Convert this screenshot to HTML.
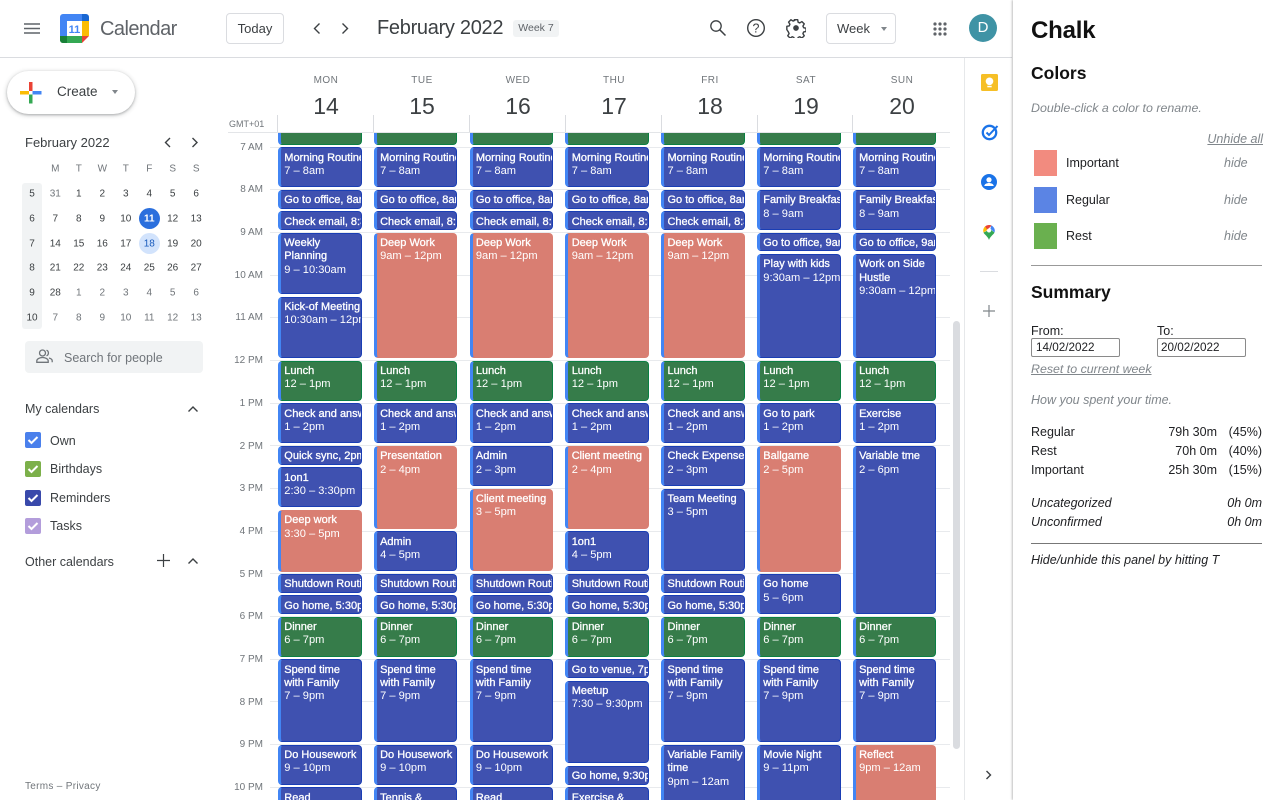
<!DOCTYPE html>
<html><head><meta charset="utf-8"><title>Calendar</title>
<style>
html,body{margin:0;padding:0;width:1280px;height:800px;overflow:hidden;background:#fff;font-family:"Liberation Sans",sans-serif;color:#3c4043}
.x{position:absolute;white-space:nowrap}
.c{position:absolute;white-space:nowrap;transform:translate(-50%,-50%)}
.m{font-size:10px;color:#3c4043}
.m.o{color:#70757a}
.e{position:absolute;box-sizing:border-box;width:83.5px;border:1px solid #1a3eb4;border-left:3px solid #4285f4;border-radius:4px;background:#3f51b0;color:#fff;font-size:11.1px;line-height:13.33px;padding:3.3px 0 0 3.3px;overflow:hidden;white-space:nowrap}
.e b{font-weight:normal;font-size:11px;-webkit-text-stroke:.3px #fff}
.s{background:#d97e72;border-color:#d97e72;border-left-color:#4285f4}
.g{background:#367c4a;border-color:#0b8043;border-left-color:#4285f4}
.k{border-bottom:0;border-radius:4px 4px 0 0}
.c1{left:278px}.c2{left:373.8px}.c3{left:469.6px}.c4{left:565.4px}.c5{left:661.2px}.c6{left:757px}.c7{left:852.8px}
.hl{position:absolute;left:270px;width:680px;height:1px;background:#e8eaed}
.tl{position:absolute;left:220px;width:43px;text-align:right;font-size:10px;color:#70757a;line-height:12px}
.dn{position:absolute;width:60px;text-align:center;font-size:10px;letter-spacing:.5px;color:#70757a;top:75px}
.dd{position:absolute;width:60px;text-align:center;font-size:23px;color:#3c4043;top:93px}
.vt{position:absolute;top:115px;width:1px;height:17px;background:#dadce0}
.cb{position:absolute;left:25px;width:16px;height:16px;border-radius:2px}
.it{font-style:italic;color:#80868b}
.p{font-size:12.5px;color:#202124}
</style></head><body>

<!-- top bar -->
<div style="position:absolute;left:0;top:57px;width:1012px;height:1px;background:#dadce0"></div>
<svg class="x" style="left:24px;top:23px" width="16" height="11"><path d="M0 1h16M0 5.5h16M0 10h16" stroke="#5f6368" stroke-width="1.5"/></svg>
<svg class="x" style="left:60px;top:14px" width="29" height="29" viewBox="0 0 29 29">
<path d="M3 0h19v7H7v15H0V3a3 3 0 0 1 3-3z" fill="#4285f4"/>
<path d="M22 0h4a3 3 0 0 1 3 3v4h-7z" fill="#1967d2"/>
<path d="M22 7h7v15h-7z" fill="#fbbc04"/>
<path d="M7 22h15v7H3a3 3 0 0 1-3-3v-4h7z" fill="#34a853"/>
<path d="M0 22h7v7H3a3 3 0 0 1-3-3z" fill="#188038"/>
<path d="M22 22h7l-7 7z" fill="#ea4335"/>
<rect x="7" y="7" width="15" height="15" fill="#fff"/>
<text x="14.5" y="19" text-anchor="middle" font-size="11" font-weight="bold" fill="#4285f4" font-family="Liberation Sans">11</text>
</svg>
<div class="x" style="left:100px;top:17px;font-size:20px;letter-spacing:-.55px;color:#5f6368;line-height:24px">Calendar</div>
<div class="x" style="left:226px;top:13px;width:56px;height:29px;border:1px solid #dadce0;border-radius:4px;text-align:center;line-height:29px;font-size:13px;color:#3c4043">Today</div>
<svg class="x" style="left:311px;top:21px" width="12" height="15"><path d="M8.500 2.500L3.500 7.500l5 5" fill="none" stroke="#3c4043" stroke-width="1.400"/></svg>
<svg class="x" style="left:339px;top:21px" width="12" height="15"><path d="M3.500 2.500l5 5-5 5" fill="none" stroke="#3c4043" stroke-width="1.400"/></svg>
<div class="x" style="left:377px;top:16px;font-size:20px;letter-spacing:-.3px;color:#3c4043;line-height:24px">February 2022</div>
<div class="x" style="left:513px;top:20px;width:46px;height:17px;background:#f1f3f4;border-radius:3px;text-align:center;font-size:10.500px;line-height:17px;color:#5f6368">Week 7</div>
<svg class="x" style="left:709px;top:19px" width="18" height="18"><circle cx="7" cy="7" r="5.200" fill="none" stroke="#3c4043" stroke-width="1.300"/><path d="M10.800 10.800L16.500 16.500" stroke="#3c4043" stroke-width="1.500"/></svg>
<svg class="x" style="left:746px;top:18px" width="20" height="20"><circle cx="10" cy="10" r="8.300" fill="none" stroke="#3c4043" stroke-width="1.400"/><text x="10" y="14.500" text-anchor="middle" font-size="12.500" fill="#3c4043" font-family="Liberation Sans">?</text></svg>
<svg class="x" style="left:786px;top:18px" width="20" height="20" viewBox="0 0 24 24"><path d="M10 2h4l.5 3 2 .9 2.600-1.600 2.800 2.800-1.600 2.600.9 2 2.800.5v4l-2.800.5-.9 2 1.600 2.600-2.800 2.800-2.600-1.600-2 .9-.5 2.800h-4l-.5-2.800-2-.9-2.600 1.600-2.800-2.800 1.600-2.600-.9-2L1 14v-4l2.800-.5.9-2-1.600-2.600 2.800-2.800 2.600 1.600 2-.9z" fill="none" stroke="#3c4043" stroke-width="1.700" stroke-linejoin="round"/><circle cx="12" cy="12" r="3.400" fill="#3c4043"/></svg>
<div class="x" style="left:826px;top:13px;width:68px;height:29px;border:1px solid #dadce0;border-radius:4px"></div>
<div class="x" style="left:837px;top:21px;font-size:13px;line-height:15px;color:#3c4043">Week</div>
<div class="x" style="left:881px;top:27px;width:0;height:0;border:3.500px solid transparent;border-top:4px solid #80868b;border-bottom:0"></div>
<svg class="x" style="left:933px;top:22px" width="14" height="14" fill="#5f6368"><circle cx="2" cy="2" r="1.600"/><circle cx="7" cy="2" r="1.600"/><circle cx="12" cy="2" r="1.600"/><circle cx="2" cy="7" r="1.600"/><circle cx="7" cy="7" r="1.600"/><circle cx="12" cy="7" r="1.600"/><circle cx="2" cy="12" r="1.600"/><circle cx="7" cy="12" r="1.600"/><circle cx="12" cy="12" r="1.600"/></svg>
<div class="x" style="left:969px;top:14px;width:28px;height:28px;border-radius:50%;background:#3f93a5;color:#fff;text-align:center;line-height:28px;font-size:15px">D</div>

<!-- left sidebar -->
<div class="x" style="left:7px;top:71px;width:128px;height:43px;border-radius:22px;background:#fff;box-shadow:0 1px 2px rgba(60,64,67,.3),0 1px 4px 1px rgba(60,64,67,.18)"></div>
<svg class="x" style="left:20px;top:82px" width="22" height="22"><path d="M9 0h3.500v9H9z" fill="#ea4335"/><path d="M12.500 9H21.500v3.500h-9z" fill="#4285f4"/><path d="M9 12.500h3.500v9H9z" fill="#34a853"/><path d="M0 9h9v3.500H0z" fill="#fbbc04"/></svg>
<div class="x" style="left:57px;top:84px;font-size:13.500px;line-height:16px;color:#3c4043">Create</div>
<div class="x" style="left:112px;top:90px;width:0;height:0;border:3.500px solid transparent;border-top:4px solid #80868b;border-bottom:0"></div>
<div class="x" style="left:25px;top:135px;font-size:13px;line-height:16px;color:#3c4043">February 2022</div>
<svg class="x" style="left:162px;top:136px" width="12" height="13"><path d="M8 2L3.500 6.500 8 11" fill="none" stroke="#3c4043" stroke-width="1.400"/></svg>
<svg class="x" style="left:189px;top:136px" width="12" height="13"><path d="M3.500 2L8 6.500 3.500 11" fill="none" stroke="#3c4043" stroke-width="1.400"/></svg>
<div class="x" style="left:22px;top:183px;width:20px;height:146px;background:#f1f3f4;border-radius:3px"></div>
<div class="x" style="left:138.600px;top:208px;width:21.400px;height:21.400px;border-radius:50%;background:#2b6fdd"></div>
<div class="x" style="left:138.600px;top:232.800px;width:21.400px;height:21.400px;border-radius:50%;background:#d2e3fc"></div>

<div class="c m o" style="left:55.300px;top:168.600px">M</div><div class="c m o" style="left:78.800px;top:168.600px">T</div><div class="c m o" style="left:102.300px;top:168.600px">W</div><div class="c m o" style="left:125.800px;top:168.600px">T</div><div class="c m o" style="left:149.300px;top:168.600px">F</div><div class="c m o" style="left:172.700px;top:168.600px">S</div><div class="c m o" style="left:196.200px;top:168.600px">S</div>

<div class="c m" style="left:32px;top:193.600px">5</div><div class="c m o" style="left:55.300px;top:193.600px">31</div><div class="c m" style="left:78.800px;top:193.600px">1</div><div class="c m" style="left:102.300px;top:193.600px">2</div><div class="c m" style="left:125.800px;top:193.600px">3</div><div class="c m" style="left:149.300px;top:193.600px">4</div><div class="c m" style="left:172.700px;top:193.600px">5</div><div class="c m" style="left:196.200px;top:193.600px">6</div>

<div class="c m" style="left:32px;top:218.600px">6</div><div class="c m" style="left:55.300px;top:218.600px">7</div><div class="c m" style="left:78.800px;top:218.600px">8</div><div class="c m" style="left:102.300px;top:218.600px">9</div><div class="c m" style="left:125.800px;top:218.600px">10</div><div class="c m" style="left:149.300px;top:218.600px;color:#fff;font-weight:bold">11</div><div class="c m" style="left:172.700px;top:218.600px">12</div><div class="c m" style="left:196.200px;top:218.600px">13</div>

<div class="c m" style="left:32px;top:243.500px">7</div><div class="c m" style="left:55.300px;top:243.500px">14</div><div class="c m" style="left:78.800px;top:243.500px">15</div><div class="c m" style="left:102.300px;top:243.500px">16</div><div class="c m" style="left:125.800px;top:243.500px">17</div><div class="c m" style="left:149.300px;top:243.500px;color:#185abc">18</div><div class="c m" style="left:172.700px;top:243.500px">19</div><div class="c m" style="left:196.200px;top:243.500px">20</div>

<div class="c m" style="left:32px;top:268.400px">8</div><div class="c m" style="left:55.300px;top:268.400px">21</div><div class="c m" style="left:78.800px;top:268.400px">22</div><div class="c m" style="left:102.300px;top:268.400px">23</div><div class="c m" style="left:125.800px;top:268.400px">24</div><div class="c m" style="left:149.300px;top:268.400px">25</div><div class="c m" style="left:172.700px;top:268.400px">26</div><div class="c m" style="left:196.200px;top:268.400px">27</div>

<div class="c m" style="left:32px;top:293.300px">9</div><div class="c m" style="left:55.300px;top:293.300px">28</div><div class="c m o" style="left:78.800px;top:293.300px">1</div><div class="c m o" style="left:102.300px;top:293.300px">2</div><div class="c m o" style="left:125.800px;top:293.300px">3</div><div class="c m o" style="left:149.300px;top:293.300px">4</div><div class="c m o" style="left:172.700px;top:293.300px">5</div><div class="c m o" style="left:196.200px;top:293.300px">6</div>

<div class="c m" style="left:32px;top:318.200px">10</div><div class="c m o" style="left:55.300px;top:318.200px">7</div><div class="c m o" style="left:78.800px;top:318.200px">8</div><div class="c m o" style="left:102.300px;top:318.200px">9</div><div class="c m o" style="left:125.800px;top:318.200px">10</div><div class="c m o" style="left:149.300px;top:318.200px">11</div><div class="c m o" style="left:172.700px;top:318.200px">12</div><div class="c m o" style="left:196.200px;top:318.200px">13</div>

<div class="x" style="left:25px;top:341px;width:178px;height:32px;background:#f1f3f4;border-radius:4px"></div>
<svg class="x" style="left:36px;top:349px" width="17" height="15" fill="none" stroke="#70757a" stroke-width="1.300"><circle cx="6.500" cy="4" r="3"/><path d="M.8 13.300v-1.500c0-2 3-3.300 5.700-3.300s5.700 1.300 5.700 3.300v1.500z"/><path d="M10.500 1.200a3 3 0 0 1 0 5.600M13 9c1.800.5 3.200 1.400 3.200 2.800v1.500"/></svg>
<div class="x" style="left:64px;top:351px;font-size:12.500px;line-height:15px;color:#70757a">Search for people</div>

<div class="x" style="left:25px;top:402px;font-size:12.500px;line-height:15px;color:#3c4043">My calendars</div>
<svg class="x" style="left:187px;top:405px" width="12" height="8"><path d="M1.500 6.500L6 2l4.500 4.500" fill="none" stroke="#3c4043" stroke-width="1.400"/></svg>
<div class="cb" style="top:432px;background:#4a80ec"></div>
<div class="cb" style="top:461px;background:#7cb04a"></div>
<div class="cb" style="top:489.500px;background:#3949ab"></div>
<div class="cb" style="top:518px;background:#b39ddb"></div>
<svg class="x" style="left:25px;top:432px" width="16" height="16"><path d="M3.500 8l3 3 6-6" fill="none" stroke="#fff" stroke-width="2"/></svg>
<svg class="x" style="left:25px;top:461px" width="16" height="16"><path d="M3.500 8l3 3 6-6" fill="none" stroke="#fff" stroke-width="2"/></svg>
<svg class="x" style="left:25px;top:489.500px" width="16" height="16"><path d="M3.500 8l3 3 6-6" fill="none" stroke="#fff" stroke-width="2"/></svg>
<svg class="x" style="left:25px;top:518px" width="16" height="16"><path d="M3.500 8l3 3 6-6" fill="none" stroke="#fff" stroke-width="2"/></svg>
<div class="x" style="left:50px;top:434px;font-size:12.500px;line-height:15px">Own</div>
<div class="x" style="left:50px;top:462px;font-size:12.500px;line-height:15px">Birthdays</div>
<div class="x" style="left:50px;top:491px;font-size:12.500px;line-height:15px">Reminders</div>
<div class="x" style="left:50px;top:519px;font-size:12.500px;line-height:15px">Tasks</div>
<div class="x" style="left:25px;top:555px;font-size:12.500px;line-height:15px;color:#3c4043">Other calendars</div>
<svg class="x" style="left:157px;top:554px" width="13" height="13"><path d="M6.500 0v13M0 6.500h13" stroke="#3c4043" stroke-width="1.200"/></svg>
<svg class="x" style="left:187px;top:557px" width="12" height="8"><path d="M1.500 6.500L6 2l4.500 4.500" fill="none" stroke="#3c4043" stroke-width="1.400"/></svg>
<div class="x" style="left:25px;top:781px;font-size:10px;letter-spacing:.3px;line-height:12px;color:#70757a">Terms – Privacy</div>

<!-- day headers -->
<div class="dn" style="left:296px">MON</div><div class="dd" style="left:296px">14</div>
<div class="dn" style="left:392px">TUE</div><div class="dd" style="left:392px">15</div>
<div class="dn" style="left:488px">WED</div><div class="dd" style="left:488px">16</div>
<div class="dn" style="left:584px">THU</div><div class="dd" style="left:584px">17</div>
<div class="dn" style="left:680px">FRI</div><div class="dd" style="left:680px">18</div>
<div class="dn" style="left:776px">SAT</div><div class="dd" style="left:776px">19</div>
<div class="dn" style="left:872px">SUN</div><div class="dd" style="left:872px">20</div>
<div class="vt" style="left:277px"></div><div class="vt" style="left:373px"></div><div class="vt" style="left:469px"></div><div class="vt" style="left:565px"></div><div class="vt" style="left:661px"></div><div class="vt" style="left:757px"></div><div class="vt" style="left:852px"></div>
<div class="x" style="left:229px;top:118px;font-size:9px;line-height:12px;color:#70757a">GMT+01</div>
<div class="x" style="left:228px;top:132px;width:722px;height:1px;background:#e3e5e8"></div>

<!-- time labels -->
<div class="tl" style="top:141.500px">7 AM</div><div class="tl" style="top:184px">8 AM</div><div class="tl" style="top:227px">9 AM</div><div class="tl" style="top:270px">10 AM</div><div class="tl" style="top:312px">11 AM</div><div class="tl" style="top:355px">12 PM</div><div class="tl" style="top:398px">1 PM</div><div class="tl" style="top:441px">2 PM</div><div class="tl" style="top:483px">3 PM</div><div class="tl" style="top:526px">4 PM</div><div class="tl" style="top:569px">5 PM</div><div class="tl" style="top:611px">6 PM</div><div class="tl" style="top:654px">7 PM</div><div class="tl" style="top:697px">8 PM</div><div class="tl" style="top:739px">9 PM</div><div class="tl" style="top:782px">10 PM</div>

<!-- grid -->
<div style="position:absolute;left:0;top:133px;width:964px;height:667px;overflow:hidden">
<div style="position:absolute;left:0;top:-133px;width:964px;height:800px">
<div class="hl" style="top:147px"></div><div class="hl" style="top:189px"></div><div class="hl" style="top:232px"></div><div class="hl" style="top:275px"></div><div class="hl" style="top:317px"></div><div class="hl" style="top:360px"></div><div class="hl" style="top:403px"></div><div class="hl" style="top:445px"></div><div class="hl" style="top:488px"></div><div class="hl" style="top:531px"></div><div class="hl" style="top:573px"></div><div class="hl" style="top:616px"></div><div class="hl" style="top:659px"></div><div class="hl" style="top:701px"></div><div class="hl" style="top:744px"></div><div class="hl" style="top:787px"></div>

<!-- Mon -->
<div class="e g c1" style="top:133px;height:11.700px;border-top:0;border-radius:0 0 4px 4px"></div>
<div class="e c1" style="top:147.300px;height:40.200px"><b>Morning Routine</b><br>7 – 8am</div>
<div class="e c1" style="top:190px;height:18.800px"><b>Go to office, 8am</b></div>
<div class="e c1" style="top:211.300px;height:18.800px"><b>Check email, 8:30am</b></div>
<div class="e c1" style="top:232.600px;height:61.500px"><b>Weekly<br>Planning</b><br>9 – 10:30am</div>
<div class="e c1" style="top:296.600px;height:61.500px"><b>Kick-of Meeting</b><br>10:30am – 12pm</div>
<div class="e g c1" style="top:360.600px;height:40.200px"><b>Lunch</b><br>12 – 1pm</div>
<div class="e c1" style="top:403.300px;height:40.200px"><b>Check and answer</b><br>1 – 2pm</div>
<div class="e c1" style="top:446px;height:18.800px"><b>Quick sync, 2pm</b></div>
<div class="e c1" style="top:467.300px;height:40.200px"><b>1on1</b><br>2:30 – 3:30pm</div>
<div class="e s c1" style="top:510px;height:61.500px"><b>Deep work</b><br>3:30 – 5pm</div>
<div class="e c1" style="top:574px;height:18.800px"><b>Shutdown Routine</b></div>
<div class="e c1" style="top:595.300px;height:18.800px"><b>Go home, 5:30pm</b></div>
<div class="e g c1" style="top:616.600px;height:40.200px"><b>Dinner</b><br>6 – 7pm</div>
<div class="e c1" style="top:659.300px;height:82.800px"><b>Spend time<br>with Family</b><br>7 – 9pm</div>
<div class="e c1" style="top:744.600px;height:40.200px"><b>Do Housework</b><br>9 – 10pm</div>
<div class="e c1 k" style="top:787.300px;height:12.700px"><b>Read</b></div>

<!-- Tue -->
<div class="e g c2" style="top:133px;height:11.700px;border-top:0;border-radius:0 0 4px 4px"></div>
<div class="e c2" style="top:147.300px;height:40.200px"><b>Morning Routine</b><br>7 – 8am</div>
<div class="e c2" style="top:190px;height:18.800px"><b>Go to office, 8am</b></div>
<div class="e c2" style="top:211.300px;height:18.800px"><b>Check email, 8:30am</b></div>
<div class="e s c2" style="top:232.600px;height:125.500px"><b>Deep Work</b><br>9am – 12pm</div>
<div class="e g c2" style="top:360.600px;height:40.200px"><b>Lunch</b><br>12 – 1pm</div>
<div class="e c2" style="top:403.300px;height:40.200px"><b>Check and answer</b><br>1 – 2pm</div>
<div class="e s c2" style="top:446px;height:82.800px"><b>Presentation</b><br>2 – 4pm</div>
<div class="e c2" style="top:531.300px;height:40.200px"><b>Admin</b><br>4 – 5pm</div>
<div class="e c2" style="top:574px;height:18.800px"><b>Shutdown Routine</b></div>
<div class="e c2" style="top:595.300px;height:18.800px"><b>Go home, 5:30pm</b></div>
<div class="e g c2" style="top:616.600px;height:40.200px"><b>Dinner</b><br>6 – 7pm</div>
<div class="e c2" style="top:659.300px;height:82.800px"><b>Spend time<br>with Family</b><br>7 – 9pm</div>
<div class="e c2" style="top:744.600px;height:40.200px"><b>Do Housework</b><br>9 – 10pm</div>
<div class="e c2 k" style="top:787.300px;height:12.700px"><b>Tennis &amp;</b></div>

<!-- Wed -->
<div class="e g c3" style="top:133px;height:11.700px;border-top:0;border-radius:0 0 4px 4px"></div>
<div class="e c3" style="top:147.300px;height:40.200px"><b>Morning Routine</b><br>7 – 8am</div>
<div class="e c3" style="top:190px;height:18.800px"><b>Go to office, 8am</b></div>
<div class="e c3" style="top:211.300px;height:18.800px"><b>Check email, 8:30am</b></div>
<div class="e s c3" style="top:232.600px;height:125.500px"><b>Deep Work</b><br>9am – 12pm</div>
<div class="e g c3" style="top:360.600px;height:40.200px"><b>Lunch</b><br>12 – 1pm</div>
<div class="e c3" style="top:403.300px;height:40.200px"><b>Check and answer</b><br>1 – 2pm</div>
<div class="e c3" style="top:446px;height:40.200px"><b>Admin</b><br>2 – 3pm</div>
<div class="e s c3" style="top:488.600px;height:82.800px"><b>Client meeting</b><br>3 – 5pm</div>
<div class="e c3" style="top:574px;height:18.800px"><b>Shutdown Routine</b></div>
<div class="e c3" style="top:595.300px;height:18.800px"><b>Go home, 5:30pm</b></div>
<div class="e g c3" style="top:616.600px;height:40.200px"><b>Dinner</b><br>6 – 7pm</div>
<div class="e c3" style="top:659.300px;height:82.800px"><b>Spend time<br>with Family</b><br>7 – 9pm</div>
<div class="e c3" style="top:744.600px;height:40.200px"><b>Do Housework</b><br>9 – 10pm</div>
<div class="e c3 k" style="top:787.300px;height:12.700px"><b>Read</b></div>

<!-- Thu -->
<div class="e g c4" style="top:133px;height:11.700px;border-top:0;border-radius:0 0 4px 4px"></div>
<div class="e c4" style="top:147.300px;height:40.200px"><b>Morning Routine</b><br>7 – 8am</div>
<div class="e c4" style="top:190px;height:18.800px"><b>Go to office, 8am</b></div>
<div class="e c4" style="top:211.300px;height:18.800px"><b>Check email, 8:30am</b></div>
<div class="e s c4" style="top:232.600px;height:125.500px"><b>Deep Work</b><br>9am – 12pm</div>
<div class="e g c4" style="top:360.600px;height:40.200px"><b>Lunch</b><br>12 – 1pm</div>
<div class="e c4" style="top:403.300px;height:40.200px"><b>Check and answer</b><br>1 – 2pm</div>
<div class="e s c4" style="top:446px;height:82.800px"><b>Client meeting</b><br>2 – 4pm</div>
<div class="e c4" style="top:531.300px;height:40.200px"><b>1on1</b><br>4 – 5pm</div>
<div class="e c4" style="top:574px;height:18.800px"><b>Shutdown Routine</b></div>
<div class="e c4" style="top:595.300px;height:18.800px"><b>Go home, 5:30pm</b></div>
<div class="e g c4" style="top:616.600px;height:40.200px"><b>Dinner</b><br>6 – 7pm</div>
<div class="e c4" style="top:659.300px;height:18.800px"><b>Go to venue, 7pm</b></div>
<div class="e c4" style="top:680.600px;height:82.800px"><b>Meetup</b><br>7:30 – 9:30pm</div>
<div class="e c4" style="top:766px;height:18.800px"><b>Go home, 9:30pm</b></div>
<div class="e c4 k" style="top:787.300px;height:12.700px"><b>Exercise &amp;</b></div>

<!-- Fri -->
<div class="e g c5" style="top:133px;height:11.700px;border-top:0;border-radius:0 0 4px 4px"></div>
<div class="e c5" style="top:147.300px;height:40.200px"><b>Morning Routine</b><br>7 – 8am</div>
<div class="e c5" style="top:190px;height:18.800px"><b>Go to office, 8am</b></div>
<div class="e c5" style="top:211.300px;height:18.800px"><b>Check email, 8:30am</b></div>
<div class="e s c5" style="top:232.600px;height:125.500px"><b>Deep Work</b><br>9am – 12pm</div>
<div class="e g c5" style="top:360.600px;height:40.200px"><b>Lunch</b><br>12 – 1pm</div>
<div class="e c5" style="top:403.300px;height:40.200px"><b>Check and answer</b><br>1 – 2pm</div>
<div class="e c5" style="top:446px;height:40.200px"><b>Check Expenses</b><br>2 – 3pm</div>
<div class="e c5" style="top:488.600px;height:82.800px"><b>Team Meeting</b><br>3 – 5pm</div>
<div class="e c5" style="top:574px;height:18.800px"><b>Shutdown Routine</b></div>
<div class="e c5" style="top:595.300px;height:18.800px"><b>Go home, 5:30pm</b></div>
<div class="e g c5" style="top:616.600px;height:40.200px"><b>Dinner</b><br>6 – 7pm</div>
<div class="e c5" style="top:659.300px;height:82.800px"><b>Spend time<br>with Family</b><br>7 – 9pm</div>
<div class="e c5 k" style="top:744.600px;height:55.400px"><b>Variable Family<br>time</b><br>9pm – 12am</div>

<!-- Sat -->
<div class="e g c6" style="top:133px;height:11.700px;border-top:0;border-radius:0 0 4px 4px"></div>
<div class="e c6" style="top:147.300px;height:40.200px"><b>Morning Routine</b><br>7 – 8am</div>
<div class="e c6" style="top:190px;height:40.200px"><b>Family Breakfast</b><br>8 – 9am</div>
<div class="e c6" style="top:232.600px;height:18.800px"><b>Go to office, 9am</b></div>
<div class="e c6" style="top:254px;height:104.200px"><b>Play with kids</b><br>9:30am – 12pm</div>
<div class="e g c6" style="top:360.600px;height:40.200px"><b>Lunch</b><br>12 – 1pm</div>
<div class="e c6" style="top:403.300px;height:40.200px"><b>Go to park</b><br>1 – 2pm</div>
<div class="e s c6" style="top:446px;height:125.500px"><b>Ballgame</b><br>2 – 5pm</div>
<div class="e c6" style="top:574px;height:40.200px"><b>Go home</b><br>5 – 6pm</div>
<div class="e g c6" style="top:616.600px;height:40.200px"><b>Dinner</b><br>6 – 7pm</div>
<div class="e c6" style="top:659.300px;height:82.800px"><b>Spend time<br>with Family</b><br>7 – 9pm</div>
<div class="e c6 k" style="top:744.600px;height:55.400px"><b>Movie Night</b><br>9 – 11pm</div>

<!-- Sun -->
<div class="e g c7" style="top:133px;height:11.700px;border-top:0;border-radius:0 0 4px 4px"></div>
<div class="e c7" style="top:147.300px;height:40.200px"><b>Morning Routine</b><br>7 – 8am</div>
<div class="e c7" style="top:190px;height:40.200px"><b>Family Breakfast</b><br>8 – 9am</div>
<div class="e c7" style="top:232.600px;height:18.800px"><b>Go to office, 9am</b></div>
<div class="e c7" style="top:254px;height:104.200px"><b>Work on Side<br>Hustle</b><br>9:30am – 12pm</div>
<div class="e g c7" style="top:360.600px;height:40.200px"><b>Lunch</b><br>12 – 1pm</div>
<div class="e c7" style="top:403.300px;height:40.200px"><b>Exercise</b><br>1 – 2pm</div>
<div class="e c7" style="top:446px;height:168.200px"><b>Variable tme</b><br>2 – 6pm</div>
<div class="e g c7" style="top:616.600px;height:40.200px"><b>Dinner</b><br>6 – 7pm</div>
<div class="e c7" style="top:659.300px;height:82.800px"><b>Spend time<br>with Family</b><br>7 – 9pm</div>
<div class="e s c7 k" style="top:744.600px;height:55.400px"><b>Reflect</b><br>9pm – 12am</div>

<div style="position:absolute;left:953px;top:321px;width:7px;height:428px;border-radius:4px;background:#dadce0"></div>
</div></div>

<!-- side strip -->
<div class="x" style="left:964px;top:58px;width:1px;height:742px;background:#e6e8ea"></div>
<svg class="x" style="left:981px;top:74px" width="17" height="17"><rect width="17" height="17" rx="1.500" fill="#f6bf26"/><circle cx="8.500" cy="7.300" r="3.800" fill="#fff"/><rect x="6.300" y="11.800" width="4.400" height="1.500" fill="#fff"/></svg>
<svg class="x" style="left:981px;top:123px" width="18" height="18"><circle cx="8.500" cy="9.500" r="6.700" fill="none" stroke="#1a73e8" stroke-width="2.300"/><path d="M5.500 9.500l2.500 2.500L16.500 3" fill="none" stroke="#1a73e8" stroke-width="2"/></svg>
<svg class="x" style="left:981px;top:174px" width="16" height="16"><circle cx="8" cy="8" r="8" fill="#1a73e8"/><circle cx="8" cy="5.800" r="2.600" fill="#fff"/><path d="M3.300 12c0-2 2.800-3 4.700-3s4.700 1 4.700 3z" fill="#fff"/></svg>
<svg class="x" style="left:983px;top:225px" width="12" height="15" viewBox="0 0 12 15"><path d="M6 15C5 11.500 1.200 9.300.5 7.500L6 5z" fill="#34a853"/><path d="M6 15c1-3.500 4.800-5.700 5.500-7.500L8 5H6z" fill="#34a853"/><path d="M6 0a5.800 5.800 0 0 1 5.800 5.500c0 .8-.1 1.400-.3 2L7.500 4 8 1z" fill="#4285f4"/><path d="M2 1.500A5.800 5.800 0 0 1 6 0c1 0 1.800.3 2.500.7L4 5z" fill="#ea4335"/><path d="M.2 5.500A5.800 5.800 0 0 1 2 1.500L4.500 5 .5 7.500c-.2-.6-.3-1.300-.3-2z" fill="#fbbc04"/><circle cx="6" cy="5.500" r="2" fill="#fff"/></svg>
<div class="x" style="left:980px;top:271px;width:18px;height:1px;background:#dadce0"></div>
<svg class="x" style="left:983px;top:305px" width="12" height="12"><path d="M6 0v12M0 6h12" stroke="#80868b" stroke-width="1.200"/></svg>
<svg class="x" style="left:984px;top:769px" width="10" height="12"><path d="M2.500 2L6.500 6l-4 4" fill="none" stroke="#3c4043" stroke-width="1.400"/></svg>

<!-- Chalk panel -->
<div class="x" style="left:1013px;top:0;width:267px;height:800px;background:#fff;box-shadow:-1px 0 2px rgba(0,0,0,.25)"></div>
<div class="x" style="left:1031px;top:17px;font-size:24px;font-weight:bold;line-height:28px;letter-spacing:-.2px;color:#111">Chalk</div>
<div class="x" style="left:1031px;top:63px;font-size:17.500px;font-weight:bold;line-height:21px;color:#111">Colors</div>
<div class="x it" style="left:1031px;top:101px;font-size:12.400px;line-height:15px">Double-click a color to rename.</div>
<div class="x it" style="right:17px;top:132px;font-size:12.500px;line-height:15px;text-decoration:underline">Unhide all</div>
<div class="x" style="left:1034px;top:150px;width:23px;height:26px;background:#f28b7f"></div>
<div class="x" style="left:1034px;top:187px;width:23px;height:26px;background:#5b84e4"></div>
<div class="x" style="left:1034px;top:223px;width:23px;height:26px;background:#6ab04f"></div>
<div class="x p" style="left:1066px;top:156px;line-height:15px">Important</div>
<div class="x p" style="left:1066px;top:193px;line-height:15px">Regular</div>
<div class="x p" style="left:1066px;top:229px;line-height:15px">Rest</div>
<div class="x it" style="left:1224px;top:156px;font-size:12.500px;line-height:15px">hide</div>
<div class="x it" style="left:1224px;top:193px;font-size:12.500px;line-height:15px">hide</div>
<div class="x it" style="left:1224px;top:229px;font-size:12.500px;line-height:15px">hide</div>
<div class="x" style="left:1031px;top:265px;width:231px;height:1px;background:#999"></div>
<div class="x" style="left:1031px;top:282px;font-size:17.500px;font-weight:bold;line-height:21px;color:#111">Summary</div>
<div class="x p" style="left:1031px;top:324px;line-height:15px">From:</div>
<div class="x p" style="left:1157px;top:324px;line-height:15px">To:</div>
<div class="x p" style="left:1031px;top:338px;width:89px;height:19px;box-sizing:border-box;border:1px solid #8a8a8a;border-radius:2px;line-height:17px;padding-left:4px;font-size:11.700px">14/02/2022</div>
<div class="x p" style="left:1157px;top:338px;width:89px;height:19px;box-sizing:border-box;border:1px solid #8a8a8a;border-radius:2px;line-height:17px;padding-left:3px;font-size:11.700px">20/02/2022</div>
<div class="x it" style="left:1031px;top:362px;font-size:12.400px;line-height:15px;text-decoration:underline">Reset to current week</div>
<div class="x it" style="left:1031px;top:393px;font-size:12.500px;line-height:15px">How you spent your time.</div>
<div class="x p" style="left:1031px;top:425px;line-height:15px">Regular</div><div class="x p" style="right:63px;top:425px;line-height:15px">79h 30m</div><div class="x p" style="right:18px;top:425px;line-height:15px">(45%)</div>
<div class="x p" style="left:1031px;top:444px;line-height:15px">Rest</div><div class="x p" style="right:63px;top:444px;line-height:15px">70h 0m</div><div class="x p" style="right:18px;top:444px;line-height:15px">(40%)</div>
<div class="x p" style="left:1031px;top:463px;line-height:15px">Important</div><div class="x p" style="right:63px;top:463px;line-height:15px">25h 30m</div><div class="x p" style="right:18px;top:463px;line-height:15px">(15%)</div>
<div class="x p" style="left:1031px;top:496px;line-height:15px;font-style:italic">Uncategorized</div><div class="x p" style="right:18px;top:496px;line-height:15px;font-style:italic">0h 0m</div>
<div class="x p" style="left:1031px;top:515px;line-height:15px;font-style:italic">Unconfirmed</div><div class="x p" style="right:18px;top:515px;line-height:15px;font-style:italic">0h 0m</div>
<div class="x" style="left:1031px;top:543px;width:231px;height:1px;background:#777"></div>
<div class="x p" style="left:1031px;top:553px;line-height:15px;font-style:italic">Hide/unhide this panel by hitting T</div>
</body></html>
